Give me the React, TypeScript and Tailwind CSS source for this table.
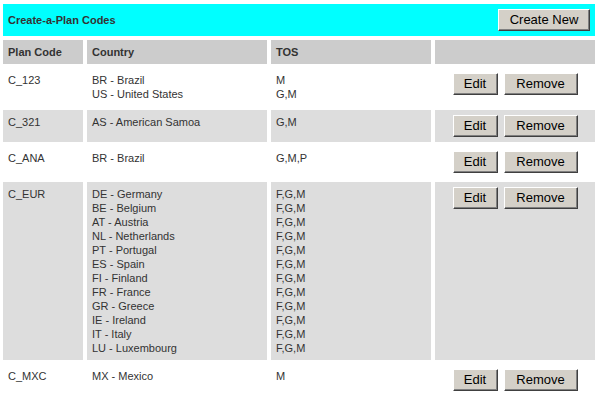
const plans = [
  {
    code: "C_123",
    entries: [
      ["BR - Brazil", "M"],
      ["US - United States", "G,M"],
    ],
  },
  { code: "C_321", entries: [["AS - American Samoa", "G,M"]] },
  { code: "C_ANA", entries: [["BR - Brazil", "G,M,P"]] },
  {
    code: "C_EUR",
    entries: [
      ["DE - Germany", "F,G,M"],
      ["BE - Belgium", "F,G,M"],
      ["AT - Austria", "F,G,M"],
      ["NL - Netherlands", "F,G,M"],
      ["PT - Portugal", "F,G,M"],
      ["ES - Spain", "F,G,M"],
      ["FI - Finland", "F,G,M"],
      ["FR - France", "F,G,M"],
      ["GR - Greece", "F,G,M"],
      ["IE - Ireland", "F,G,M"],
      ["IT - Italy", "F,G,M"],
      ["LU - Luxembourg", "F,G,M"],
    ],
  },
  { code: "C_MXC", entries: [["MX - Mexico", "M"]] },
];

function WinButton({ label, width }: { label: string; width: string }) {
  return (
    <button
      className={`${width} h-[22px] bg-[#d4d0c8] border border-t-white border-l-white border-r-[#404040] border-b-[#404040] shadow-[inset_-1px_-1px_#808080] text-[13px] leading-[18px] text-black`}
    >
      {label}
    </button>
  );
}

export default function App() {
  return (
    <div className="min-h-screen bg-white pt-[4px] pl-[3px] font-['Liberation_Sans',Arial,sans-serif] text-[11px] leading-[14px] text-[#333333]">
      <div className="grid w-[592px] grid-cols-[80px_180px_160px_160px] gap-[4px]">
        {/* title bar */}
        <div className="col-span-4 flex h-[32px] items-center justify-between bg-[#00ffff] pl-[5px] pr-[5px]">
          <span className="font-bold">Create-a-Plan Codes</span>
          <WinButton label="Create New" width="w-[92px]" />
        </div>

        {/* column headings */}
        <div className="flex h-[24px] items-center bg-[#cccccc] px-[5px] font-bold">Plan Code</div>
        <div className="flex h-[24px] items-center bg-[#cccccc] px-[5px] font-bold">Country</div>
        <div className="flex h-[24px] items-center bg-[#cccccc] px-[5px] font-bold">TOS</div>
        <div className="h-[24px] bg-[#cccccc]" />

        {plans.map((plan, i) => {
          const bg = i % 2 === 1 ? "bg-[#dddddd]" : "bg-white";
          return [
            <div key={plan.code + "c"} className={`${bg} p-[5px]`}>
              {plan.code}
            </div>,
            <div key={plan.code + "n"} className={`${bg} p-[5px]`}>
              {plan.entries.map(([country]) => (
                <div key={country}>{country}</div>
              ))}
            </div>,
            <div key={plan.code + "t"} className={`${bg} p-[5px]`}>
              {plan.entries.map(([country, tos]) => (
                <div key={country}>{tos}</div>
              ))}
            </div>,
            <div key={plan.code + "a"} className={`${bg} flex justify-center gap-[6px] p-[5px]`}>
              <WinButton label="Edit" width="w-[45px]" />
              <WinButton label="Remove" width="w-[74px]" />
            </div>,
          ];
        })}
      </div>
    </div>
  );
}
